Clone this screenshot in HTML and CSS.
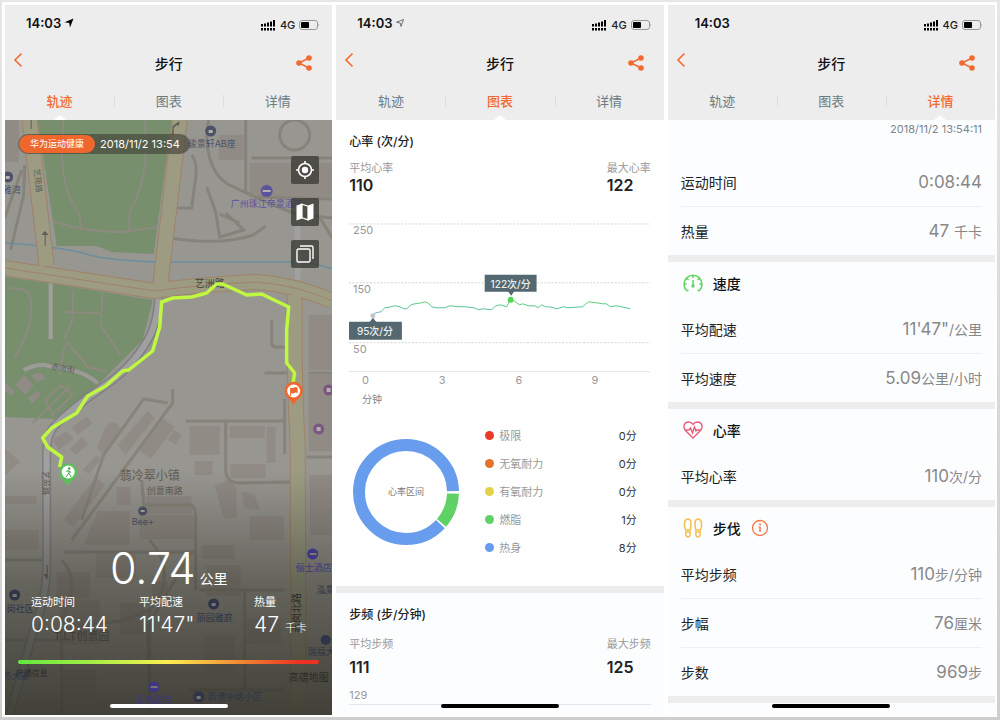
FILE: index.html
```html
<!DOCTYPE html>
<html lang="zh-CN">
<head>
    <meta charset="UTF-8">
    <meta name="viewport" content="width=device-width, initial-scale=1.0">
    <title>步行</title>
    <link rel="stylesheet" href="styles.css">
</head>
<body>
    <!-- Shared icons -->
    <svg class="sprite" aria-hidden="true">
        <symbol id="icon-signal" viewBox="0 0 15 11">
            <path d="M0 8h2v2.500H0zM3 8h2v2.500H3zM6 8h2v2.500H6zM9 8h2v2.500H9zM12 8h2v2.500h-2z"/>
            <path d="M0 4h2v2.500H0zM3 3.500h2v3H3zM6 2.500h2v4H6zM9 1.500h2v5H9zM12 0h2v6.500h-2z"/>
        </symbol>
        <symbol id="icon-battery" viewBox="0 0 21 10">
            <rect x=".5" y=".5" width="18" height="9" rx="2.500" fill="none" stroke="#999"/>
            <rect x="2" y="2" width="8" height="6" rx="1"/>
            <path d="M19.500 3.500q1.500 1.500 0 3z" fill="#999"/>
        </symbol>
        <symbol id="icon-back" viewBox="0 0 10 16">
            <path d="M8.500 1.500 2 8l6.500 6.500" fill="none" stroke="#f26a32" stroke-width="1.600"/>
        </symbol>
        <symbol id="icon-share" viewBox="0 0 18 16">
            <path d="M14 3 4 8l10 5" fill="none" stroke="#f26a32" stroke-width="1.500"/>
            <circle cx="14" cy="3" r="2.800" fill="#f26a32"/>
            <circle cx="4" cy="8" r="2.800" fill="#f26a32"/>
            <circle cx="14" cy="13" r="2.800" fill="#f26a32"/>
        </symbol>
    </svg>

    <main class="sheet">
        <!-- Track -->
        <section class="phone phone-track">
            <header class="top">
                <div class="status">
                    <span class="time">14:03</span>
                    <svg class="arrow" viewBox="0 0 10 10"><path d="M9.500.5 6 9.500 5.200 4.900.5 4.200z"/></svg>
                    <svg class="signal"><use href="#icon-signal"/></svg>
                    <span class="network">4G</span>
                    <svg class="battery"><use href="#icon-battery"/></svg>
                </div>
                <div class="bar">
                    <button type="button" class="icon-button" aria-label="返回"><svg class="back"><use href="#icon-back"/></svg></button>
                    <h1>步行</h1>
                    <button type="button" class="icon-button" aria-label="分享"><svg class="share"><use href="#icon-share"/></svg></button>
                </div>
                <nav class="tabs">
                    <button type="button" class="tab active">轨迹</button>
                    <button type="button" class="tab">图表</button>
                    <button type="button" class="tab">详情</button>
                </nav>
            </header>

            <div class="track">
                <svg class="map" viewBox="5 120 328 595" preserveAspectRatio="xMidYMid slice">
                    <defs>
                        <linearGradient id="shade" x1="0" y1="0" x2="0" y2="1">
                            <stop offset="0" stop-color="#33332b" stop-opacity="0"/>
                            <stop offset=".45" stop-color="#33332b" stop-opacity=".5"/>
                            <stop offset="1" stop-color="#33332b" stop-opacity=".86"/>
                        </linearGradient>
                    </defs>
                    <rect x="5" y="120" width="328" height="595" fill="#989690"/>

                    <!-- Parks -->
                    <g fill="#788f6e">
                        <path d="M38 120H172L154 254 112 252 97 246 57 246z"/>
                        <path d="M5 277 50 283 153 300 148 320 143 340 100 383 55 419 5 417z"/>
                    </g>

                    <!-- Buildings -->
                    <g fill="#918b86">
                        <path d="M5 120h14v42H5zM219 135h25v25h-25zM250 163h83v34h-83zM309 315h24v55h-24zM309 375h24v76h-24z"/>
                        <path d="M16 385 24 375 34 385 26 395zM31 375l11-2 4 6-9 3zM28 398l9-7 4 4-9 9zM5 382l10 10-3 4-7-6z"/>
                        <path d="M5 448 21 462 5 475zM53 440l14-9 7 8-15 11zM72 427l15-10 6 6-15 12zM70 449l12-12 7 7-13 11zM83 470l14-15 5 4-13 15z"/>
                        <path d="M104 431q4-11 13-8l5 8-19 23-6-6zM118 445l30-34 7 7-29 37zM139 450l22-33 14 10-24 32zM168 440l6-10 8 5-6 10z"/>
                        <path d="M190 426h30v29h-30zM230 426h35v12h-35zM267 427h9v36h-9zM231 464h35v14h-35zM195 461h18v14h-18zM117 487h14v18h-14z"/>
                        <path d="M146 496h46v18h-46zM98 511h32v34H84zM140 515h54v24h-54zM215 486l15-7 7 9v30h-13zM242 491l12 3 7 16-16-2zM5 496h32v8H5z"/>
                        <path d="M64 520 96 477l9 8-31 42zM202 545h33v14h-33zM57 572h33v26H57zM96 553h40v25H96zM207 565h34v31h-34zM152 582h16v20h-16z"/>
                        <path d="M250 516h34v24h-34zM310 475h23v60h-23zM5 530h34v20H5zM60 600h40v45H60zM120 603h24v32h-24zM205 635h30v36h-30zM62 670h35v30H62zM246 618h36v26h-36z"/>
                    </g>

                    <!-- Paths -->
                    <g fill="none" stroke="#86847a" stroke-width="3">
                        <path d="M192 155q7 8 3 30l-3 23H175M209 120q-4 20 1 38t18 26l31 15 37 15 37 4M246 120v72l10 5 77 2M252 158h81"/>
                        <circle cx="295" cy="135" r="15"/>
                        <path d="M207 187l9 25 4 25 24-7-18-17M171 238q50 8 83-3l12-9M320 217l13 22M22 170 5 218M25 165l-1 30-13 55M220 214l20 9"/>
                        <path d="M186 421h98M226 421v48q0 13 12 14l55-1M309 373h24M307 457h26M285 399v55M272 320v23q0 4 5 4h9M265 373h24"/>
                        <path d="M173 389v14L72 540M168 403l-24-4-40 56M104 455 82 520M142 480l2 25h48q4 2 4 15v70"/>
                        <path d="M5 560h40M65 552h130M62 560q20 20 0 60v95M150 540q30 35 0 70v105M193 550l-45 76 2 89M5 640h70M75 626l46-5 29-11M200 590h85M245 590v100M190 690h95"/>
                    </g>
                    <g fill="none" stroke="#8e8a80" stroke-width="2">
                        <path d="M64 120q-6 60 10 85 9 12 6 25M145 120q6 55-14 90-3 7-1 20M53 221q30 11 70 11l35-5M10 288q19 0 20 8 7 25-15 62M103 292l-2 33 20 30M65 312l35 1M60 375q5-40 10-30l18 22 20 5M73 290v30l-9 20M33 423l38-37M46 400l15-15 12 10-20 20z"/>
                    </g>
                    <path d="M5 243q60 4 85 12 25 6 70 7h140l12 1 21 6" fill="none" stroke="#6a8ea0" stroke-width="1.500"/>

                    <!-- Roads -->
                    <g fill="none" stroke-linejoin="round">
                        <path d="M159 298q-2 28-11 42-16 28-45 47-35 25-48 39-8 8-8 28v116q-1 30-12 57L10 715" stroke="#7f7f83" stroke-width="9"/>
                        <path d="M159 298q-2 28-11 42-16 28-45 47-35 25-48 39-8 8-8 28v116q-1 30-12 57L10 715M298 225v55" stroke="#a1a0a1" stroke-width="6"/>
                        <path d="M51 283v56" stroke="#a1a0a1" stroke-width="4"/>
                        <path d="M24 370q15-7 25-4l22 4q15 3 27 13" stroke="#9d9b98" stroke-width="4"/>
                        <path d="M30 120 47 266M180 120 160 290M295 295q-1 80 3 150l1 270M5 268l150 23q40-6 102-9 40 3 76 19" stroke="#9f8268" stroke-width="16"/>
                        <path d="M290 680q-10 17-32 24H10M306 680q5 14 27 24" stroke="#9f8268"/>
                        <path d="M30 120 47 266M180 120 160 290M295 295q-1 80 3 150l1 270M5 268l150 23q40-6 102-9 40 3 76 19" stroke="#9d9c83" stroke-width="14"/>
                        <path d="M5 268l150 23q40-6 102-9 40 3 76 19" stroke="#9f8268"/>
                    </g>
                    <g fill="#605d55" font-size="8">
                        <path d="M31 120h1v9h-1zM45 231l4 4h-3v11h-1v-11h-3zM47 579h1v-14h-1v9h-3zM173 126l7-5-1 5-2-1-3 3v7h-2z"/>
                        <text transform="translate(34 169) rotate(83)">艺苑路</text>
                        <text transform="translate(43 471) rotate(90)">艺苑路</text>
                        <text transform="translate(51 369) rotate(10)">赤岗街</text>
                        <text x="120" y="480" font-size="12">翡冷翠小镇</text>
                        <text x="147" y="494" font-size="9">创意南路</text>
                    </g>
                    <text x="195" y="287" font-size="10" fill="#45443f">艺洲路</text>
                    <g fill="#4d5268" font-size="9">
                        <circle cx="211" cy="131" r="5.500"/><circle cx="8" cy="177" r="5.500"/><circle cx="143" cy="511" r="4.500"/>
                        <text x="188" y="147">骏景轩AB座</text>
                        <text x="3" y="193">雅湾</text>
                        <text x="132" y="525">Bee+</text>
                    </g>
                    <circle cx="267" cy="191" r="6" fill="#5b52a0"/>
                    <text x="231" y="207" font-size="9" fill="#5b52a0">广州珠江帝景酒店</text>
                    <g fill="#795781"><circle cx="329" cy="390" r="5.500"/><circle cx="319" cy="429" r="5.500"/></g>
                    <g fill="#b4b0ad"><path d="M209 130h4v3h-4zM6 176h4v3H6zM141 510h4v2h-4zM263 190h8v2h-8zM327 388h4v4h-4zM317 427h4v4h-4z"/></g>

                    <rect x="5" y="470" width="328" height="245" fill="url(#shade)"/>
                    <g fill="#2c2b27" font-size="9">
                        <text transform="translate(300 633) rotate(-90)" font-size="10">赤岗北路</text>
                        <text x="54" y="640" font-size="11" fill="#3d3c36">T.I.T创意园</text>
                        <text x="16" y="676" font-size="8">艺通信息</text>
                        <text x="289" y="681" font-size="10">高德地图</text>
                    </g>
                    <g fill="#2f3448" font-size="9">
                        <circle cx="15" cy="595" r="5.500"/><circle cx="214" cy="604" r="5.500"/><circle cx="326" cy="640" r="5"/><circle cx="199" cy="697" r="5.500"/>
                        <text x="7" y="612">岗社区</text>
                        <text x="197" y="621">丽园雅庭</text>
                        <text x="317" y="593">泓景</text>
                        <text x="308" y="655">瑞福大厦</text>
                        <text x="3" y="679">务大厦</text>
                        <text x="208" y="700">新港中路小区</text>
                    </g>
                    <g fill="#3d3685" font-size="9">
                        <circle cx="313" cy="554" r="5.500"/><circle cx="154" cy="687" r="5.500"/>
                        <text x="296" y="571">俪士酒店</text>
                        <text x="136" y="703">迎商酒店</text>
                    </g>
                    <g fill="#77756c"><path d="M13 594h4v3h-4zM212 603h4v3h-4zM197 696h4v3h-4zM310 553h7v2h-7zM151 686h7v2h-7z"/></g>

                    <!-- Route -->
                    <path d="M60 467 62 457 48 447 43 438 52 428 77 413 88 396 106 386 123 371 129 370 153 351 160 327 162 302 173 298 192 297 207 293 217 284 223 284 247 295 262 294 289 307 287 330 287 363 295 373 293 385" fill="none" stroke="#bff741" stroke-width="3.500" stroke-linejoin="round"/>
                    <path d="M68 486q-3-5-6-7.500a9 9 0 1 1 13 0Q71 481 68 486z" fill="#5cc05a"/>
                    <circle cx="68.500" cy="472" r="6.500" fill="#fff"/>
                    <circle cx="69.500" cy="468.500" r="1.200" fill="#48a348"/>
                    <path d="m66.500 471.500 2.500-1 .5 3 2 3.500M69 473l-2.500 4M69 471l2.500 1.500" fill="none" stroke="#48a348"/>
                    <path d="M294 405q-3-5-6-7.500a9 9 0 1 1 12 0Q297 400 294 405z" fill="#f0672e"/>
                    <circle cx="294" cy="391" r="6.500" fill="#fff"/>
                    <path d="M290.500 387.500q2 1 4 0t3.500.5v5q-2-1-3.500 0t-3 0v3h-1z" fill="#f0672e"/>
                </svg>

                <div class="track-head">
                    <div class="stamp"><b>华为运动健康</b><time>2018/11/2 13:54</time></div>
                </div>
                <div class="tools">
                    <button type="button" aria-label="定位">
                        <svg viewBox="0 0 20 20"><circle cx="10" cy="10" r="6.500" fill="none" stroke="#fff" stroke-width="1.600"/><circle cx="10" cy="10" r="3.200" fill="#fff"/><path d="M10 1v3M10 16v3M1 10h3M16 10h3" stroke="#fff" stroke-width="1.600"/></svg>
                    </button>
                    <button type="button" aria-label="地图">
                        <svg viewBox="0 0 20 20"><path d="m1.500 3.500 5.500-2v15l-5.500 2zM13 3.500l5.500-2v15l-5.500 2z" fill="#fff"/><path d="m7 2.200 6 2v13.600l-6-2z" fill="none" stroke="#fff" stroke-width="1.200"/></svg>
                    </button>
                    <button type="button" aria-label="图层">
                        <svg viewBox="0 0 20 20" fill="none" stroke="#fff" stroke-width="1.400"><rect x="2" y="5" width="13" height="13" rx="1.500"/><path d="M5 2h11.500q1.500 0 1.500 1.500V15"/></svg>
                    </button>
                </div>

                <div class="summary">
                    <p class="distance"><strong>0.74</strong> 公里</p>
                    <dl class="figures">
                        <div><dt>运动时间</dt><dd>0:08:44</dd></div>
                        <div><dt>平均配速</dt><dd>11'47"</dd></div>
                        <div><dt>热量</dt><dd>47 <small>千卡</small></dd></div>
                    </dl>
                    <div class="pace-scale"></div>
                </div>
            </div>
            <div class="home home-light"></div>
        </section>

        <!-- Charts -->
        <section class="phone phone-charts">
            <header class="top">
                <div class="status">
                    <span class="time">14:03</span>
                    <svg class="arrow" viewBox="0 0 10 10"><path d="M8.500 1.500 6 8.500 5.200 5 1.500 4.200z" fill="none" stroke="#555" stroke-width=".8"/></svg>
                    <svg class="signal"><use href="#icon-signal"/></svg>
                    <span class="network">4G</span>
                    <svg class="battery"><use href="#icon-battery"/></svg>
                </div>
                <div class="bar">
                    <button type="button" class="icon-button" aria-label="返回"><svg class="back"><use href="#icon-back"/></svg></button>
                    <h1>步行</h1>
                    <button type="button" class="icon-button" aria-label="分享"><svg class="share"><use href="#icon-share"/></svg></button>
                </div>
                <nav class="tabs">
                    <button type="button" class="tab">轨迹</button>
                    <button type="button" class="tab active">图表</button>
                    <button type="button" class="tab">详情</button>
                </nav>
            </header>

            <div class="chart-card">
                <h2>心率 (次/分)</h2>
                <dl class="extremes">
                    <div><dt>平均心率</dt><dd>110</dd></div>
                    <div><dt>最大心率</dt><dd>122</dd></div>
                </dl>
                <svg class="line-chart" viewBox="349 214 302 194">
                    <defs>
                        <linearGradient id="pulse" gradientUnits="userSpaceOnUse" x1="0" y1="300" x2="0" y2="316">
                            <stop offset="0" stop-color="#62d563"/>
                            <stop offset=".5" stop-color="#52c39b"/>
                            <stop offset="1" stop-color="#74aaf0"/>
                        </linearGradient>
                    </defs>
                    <path d="M349 224h302M349 283h302M349 343h302" stroke="#d4d4d4" stroke-dasharray="2 1.500"/>
                    <path d="M349 372h302" stroke="#e3e3e3"/>
                    <g class="axis">
                        <text x="353" y="234">250</text>
                        <text x="353" y="293">150</text>
                        <text x="353" y="353">50</text>
                        <text x="362" y="384">0</text>
                        <text x="439" y="384">3</text>
                        <text x="516" y="384">6</text>
                        <text x="592" y="384">9</text>
                        <text x="362" y="403" class="unit">分钟</text>
                    </g>
                    <path d="m373 315 3-2 5-1 4-4 6-1 4-1 5 1 4 2 3 0 4-4 4-1 7-1 3-1 3 1 4 4 5 1 8 0 5-2 10 1 6 0 8 1 5 2 4-1 9 1 4-4 5-1 6 2 3-6 4 0 6 4 3-1 6 2 6 0 4 2 3-3 4 2 4 0 4 1 3 1 7-2 4 1 15-1 6-5 8 1 6 1 4 0 4 3 6-1 5 1 9 2" fill="none" stroke="url(#pulse)"/>
                    <path d="M369 323l4-5 4 5zM508 291h7l-3.500 5z" fill="#536870"/>
                    <circle cx="373" cy="316" r="2.500" fill="#c4c4c4"/>
                    <circle cx="511" cy="300" r="3" fill="#56d455"/>
                    <path d="M349 322h53v18h-53zM485 275h52v17h-52z" fill="#536870"/>
                    <g class="bubble">
                        <text x="375" y="335">95次/分</text>
                        <text x="511" y="288">122次/分</text>
                    </g>
                </svg>

                <div class="zones">
                    <svg class="donut" viewBox="0 0 106 106">
                        <g fill="none" stroke-width="12">
                            <circle cx="53" cy="53" r="47" stroke="#679dec" pathLength="360" stroke-dasharray="316 44" stroke-dashoffset="-43"/>
                            <circle cx="53" cy="53" r="47" stroke="#5fd166" pathLength="360" stroke-dasharray="39 321" stroke-dashoffset="-2"/>
                        </g>
                        <text x="53" y="56" text-anchor="middle">心率区间</text>
                    </svg>
                    <ul class="legend">
                        <li class="extreme"><span>极限</span><b>0分</b></li>
                        <li class="anaerobic"><span>无氧耐力</span><b>0分</b></li>
                        <li class="aerobic"><span>有氧耐力</span><b>0分</b></li>
                        <li class="fat"><span>燃脂</span><b>1分</b></li>
                        <li class="warm"><span>热身</span><b>8分</b></li>
                    </ul>
                </div>
            </div>

            <div class="chart-card cadence">
                <h2>步频 (步/分钟)</h2>
                <dl class="extremes">
                    <div><dt>平均步频</dt><dd>111</dd></div>
                    <div><dt>最大步频</dt><dd>125</dd></div>
                </dl>
                <p class="top-tick">129</p>
            </div>
            <div class="home"></div>
        </section>

        <!-- Details -->
        <section class="phone phone-details">
            <header class="top">
                <div class="status">
                    <span class="time">14:03</span>
                    <svg class="signal"><use href="#icon-signal"/></svg>
                    <span class="network">4G</span>
                    <svg class="battery"><use href="#icon-battery"/></svg>
                </div>
                <div class="bar">
                    <button type="button" class="icon-button" aria-label="返回"><svg class="back"><use href="#icon-back"/></svg></button>
                    <h1>步行</h1>
                    <button type="button" class="icon-button" aria-label="分享"><svg class="share"><use href="#icon-share"/></svg></button>
                </div>
                <nav class="tabs">
                    <button type="button" class="tab">轨迹</button>
                    <button type="button" class="tab">图表</button>
                    <button type="button" class="tab active">详情</button>
                </nav>
            </header>

            <div class="group">
                <time class="finished">2018/11/2 13:54:11</time>
                <dl class="rows">
                    <div><dt>运动时间</dt><dd>0:08:44</dd></div>
                    <div><dt>热量</dt><dd>47 <small>千卡</small></dd></div>
                </dl>
            </div>
            <div class="group">
                <h2>
                    <svg viewBox="0 0 20 20" fill="none" stroke="#60d360" stroke-width="1.500"><path d="M5.500 17.500H3.500a9 9 0 1 1 13 0h-2M10 2v3M1 11h2.500M16.500 11H19M3.500 5.500l2 1.500M16.500 5.500l-2 1.500M10 7v5"/><circle cx="10" cy="13" r="1"/></svg>
                    速度
                </h2>
                <dl class="rows">
                    <div><dt>平均配速</dt><dd>11'47"<small>/公里</small></dd></div>
                    <div><dt>平均速度</dt><dd>5.09<small>公里/小时</small></dd></div>
                </dl>
            </div>
            <div class="group">
                <h2>
                    <svg viewBox="0 0 20 20" fill="none" stroke="#e85c7c" stroke-width="1.400"><path d="M10 18 2.500 10.500Q.5 8 1 5.500 2 2 5.500 2 8.500 2 10 4.500 11.500 2 14.500 2 18 2 19 5.500q.5 2.500-1.500 5z"/><path d="M2 10h4l1.500-2 2 5L11.500 7l1.500 4 1-1h4"/></svg>
                    心率
                </h2>
                <dl class="rows">
                    <div><dt>平均心率</dt><dd>110<small>次/分</small></dd></div>
                </dl>
            </div>
            <div class="group">
                <h2>
                    <svg viewBox="0 0 20 20" fill="none" stroke="#f2c04c" stroke-width="1.500"><path d="M2.500 12Q.8 8 1.500 4.500 2.500 1 5 1t3 3.500Q8.300 8 7.200 12zM17.500 12q1.700-4 1-7.500Q17.500 1 15 1t-3 3.500q-.3 3.500.8 7.500zM2.800 14h4.400v2q-.2 3-2.200 3t-2.200-3zM12.800 14h4.400v2q-.2 3-2.200 3t-2.200-3z"/></svg>
                    步伐
                    <button type="button" class="info" aria-label="说明"><svg viewBox="0 0 18 18"><circle cx="9" cy="9" r="7.500" fill="none" stroke="#f4794a" stroke-width="1.300"/><path d="M8.200 4.500h1.800v1.800H8.200zM7.500 7.500h2.300V13h-1.500V8.500h-.8z" fill="#f4794a"/></svg></button>
                </h2>
                <dl class="rows">
                    <div><dt>平均步频</dt><dd>110<small>步/分钟</small></dd></div>
                    <div><dt>步幅</dt><dd>76<small>厘米</small></dd></div>
                    <div><dt>步数</dt><dd>969<small>步</small></dd></div>
                </dl>
            </div>
            <div class="group last"></div>
            <div class="home"></div>
        </section>
    </main>
</body>
</html>
```
FILE: styles.css
```css
* {
    box-sizing: border-box;
}
body {
    margin: 0;
    min-height: 100vh;
    display: flex;
    padding: 2px 3px 3px 2px;
    background: linear-gradient(#e6e6e6, #cecece);
    font-family: Inter, "Noto Sans CJK SC", sans-serif;
    color: #222;
}
h1, h2, p, dl, dd, ul {
    margin: 0;
    padding: 0;
}
button {
    border: 0;
    padding: 0;
    background: none;
    font-family: inherit;
    cursor: pointer;
}
svg {
    display: block;
}
.sprite {
    position: absolute;
    width: 0;
    height: 0;
}
.sheet {
    flex: 1;
    display: grid;
    grid-template-columns: repeat(3, 1fr);
    gap: 4px;
    padding: 3px 2px 2px 3px;
    background: #fff;
}
.phone {
    position: relative;
    display: flex;
    flex-direction: column;
    min-width: 0;
    background: #fff;
}
.phone-details {
    background: #fcfdff;
}

/* header */
.top {
    background: #ededed;
}
.status {
    display: flex;
    align-items: center;
    height: 36px;
    padding: 0 12px 0 21px;
}
.phone-details .status {
    padding-left: 27px;
}
.time {
    font-size: 13px;
    font-weight: 600;
    color: #111;
}
.arrow {
    width: 10px;
    height: 10px;
    margin-left: 3px;
}
.signal {
    width: 15px;
    height: 11px;
    margin-left: auto;
}
.network {
    margin: 4px 4px 0;
    font-size: 11px;
    font-weight: 500;
}
.signal, .battery {
    margin-top: 4px;
}
.battery {
    width: 21px;
    height: 10px;
}
.bar {
    display: flex;
    align-items: center;
    justify-content: space-between;
    height: 43px;
    padding: 0 19px 0 8px;
}
.bar h1 {
    font-size: 14px;
    font-weight: 500;
    color: #111;
}
.icon-button:first-child {
    width: 29px;
}
.back {
    width: 10px;
    height: 16px;
    margin-bottom: 5px;
}
.share {
    width: 18px;
    height: 16px;
}
.tabs {
    display: grid;
    grid-template-columns: repeat(3, 1fr);
    height: 36px;
}
.tab {
    position: relative;
    padding-bottom: 3px;
    font-size: 13px;
    color: #6c7a83;
}
.tab + .tab::before {
    content: "";
    position: absolute;
    left: 0;
    top: 11px;
    height: 12px;
    border-left: 1px solid #dedede;
}
.tab.active {
    color: #f26a32;
    font-weight: 500;
}
.tab.active::after {
    content: "";
    position: absolute;
    left: calc(50% - 6px);
    bottom: 0;
    border: 6px solid transparent;
    border-top: 0;
    border-bottom: 5px solid #fff;
}
.home {
    position: absolute;
    left: 32%;
    right: 32%;
    bottom: 7px;
    height: 4px;
    border-radius: 2px;
    background: #000;
}
.home-light {
    background: #fff;
}

/* track */
.track {
    position: relative;
    flex: 1;
    display: flex;
    flex-direction: column;
    padding: 14px 13px;
    overflow: hidden;
    color: #fff;
}
.map {
    position: absolute;
    left: 0;
    top: 0;
    width: 100%;
    height: 100%;
}
.track-head, .tools, .summary {
    position: relative;
}
.stamp {
    display: flex;
    width: fit-content;
    align-items: center;
    height: 20px;
    padding: 0 10px 0 1px;
    border-radius: 10px;
    background: rgba(60, 60, 50, 0.6);
}
.stamp b {
    padding: 0 11px;
    border-radius: 9px;
    background: #f0672e;
    font-size: 9px;
    font-weight: 400;
    line-height: 18px;
}
.stamp time {
    margin-left: 5px;
    font-size: 11px;
}
.track-head {
    height: 22px;
}
.tools {
    display: flex;
    flex-direction: column;
    align-items: flex-end;
    gap: 14px;
}
.tools button {
    display: grid;
    place-items: center;
    width: 28px;
    height: 28px;
    border-radius: 2px;
    background: rgba(55, 55, 50, 0.75);
}
.tools svg {
    width: 20px;
    height: 20px;
}
.summary {
    margin-top: auto;
    padding-bottom: 37px;
}
.distance {
    text-align: center;
    font-size: 14px;
    line-height: 30px;
}
.distance strong {
    font-size: 43px;
    font-weight: 300;
}
.figures {
    display: grid;
    grid-template-columns: 108px 115px auto;
    padding-left: 13px;
}
.figures dt {
    font-size: 11px;
    line-height: 16px;
}
.figures dd {
    font-size: 21px;
    font-weight: 300;
    line-height: 30px;
}
.figures small {
    font-size: 11px;
}
.pace-scale {
    height: 4px;
    margin-top: 17px;
    border-radius: 2px;
    background: linear-gradient(to right, #62e83f, #a6ee45 25%, #fcee51 50%, #f08432 75%, #ec3323 93%);
}

/* charts */
.chart-card {
    padding: 12px 13px 24px;
}
.chart-card h2 {
    font-size: 12px;
    font-weight: 500;
    line-height: 20px;
}
.extremes {
    display: flex;
    justify-content: space-between;
    margin-top: 8px;
}
.extremes dt {
    font-size: 11px;
    line-height: 16px;
    color: #999;
}
.extremes dd {
    font-size: 16px;
    font-weight: 600;
    line-height: 18px;
}
.line-chart {
    width: 100%;
    margin-top: 20px;
}
.axis {
    font-size: 11px;
    fill: #999;
}
.unit {
    font-size: 10px;
    fill: #7a878d;
}
.bubble {
    font-size: 10px;
    font-weight: 500;
    fill: #eee;
    text-anchor: middle;
}
.zones {
    display: flex;
    align-items: center;
    margin-top: 14px;
    padding: 0 14px 0 4px;
}
.donut {
    width: 106px;
    height: 106px;
    margin-right: 26px;
    font-size: 9px;
    fill: #777;
}
.legend {
    flex: 1;
    list-style: none;
}
.legend li {
    display: flex;
    align-items: center;
    font-size: 11px;
    line-height: 28px;
    color: #999;
}
.legend li::before {
    content: "";
    width: 9px;
    height: 9px;
    margin-right: 5px;
    border-radius: 50%;
    background: currentColor;
}
.legend .extreme::before {
    background: #eb3b28;
}
.legend .anaerobic::before {
    background: #e2752b;
}
.legend .aerobic::before {
    background: #e4d148;
}
.legend .fat::before {
    background: #5fd166;
}
.legend .warm::before {
    background: #679dec;
}
.legend b {
    margin-left: auto;
    font-weight: 400;
    color: #333;
}
.cadence {
    flex: 1;
    padding-bottom: 0;
    border-top: 7px solid #ededed;
    background: #fcfdff;
}
.cadence .extremes {
    margin-top: 11px;
}
.cadence dd {
    margin-top: 6px;
}
.top-tick {
    margin-top: 10px;
    border-bottom: 1px solid #e6e6e6;
    font-size: 11px;
    line-height: 18px;
    color: #999;
}

/* details */
.phone-details .tab.active::after {
    border-bottom-color: #fcfdff;
}
.group {
    padding: 0 13px;
    border-bottom: 7px solid #ededed;
}
.finished {
    display: block;
    height: 37px;
    text-align: right;
    font-size: 11px;
    line-height: 18px;
    color: #7b868c;
}
.group h2 {
    display: flex;
    align-items: center;
    gap: 10px;
    height: 42px;
    padding-left: 2px;
    font-size: 14px;
    font-weight: 500;
    color: #111;
}
.group h2 svg {
    width: 20px;
    height: 20px;
}
.group .info svg {
    width: 18px;
    height: 18px;
}
.rows div {
    display: flex;
    align-items: center;
    justify-content: space-between;
    height: 49px;
}
.rows div + div {
    border-top: 1px solid #efefef;
}
.rows dt {
    font-size: 14px;
}
.rows dd {
    font-size: 17px;
    color: #888;
}
.rows small {
    font-size: 14px;
}
.group.last {
    border: 0;
}
```
